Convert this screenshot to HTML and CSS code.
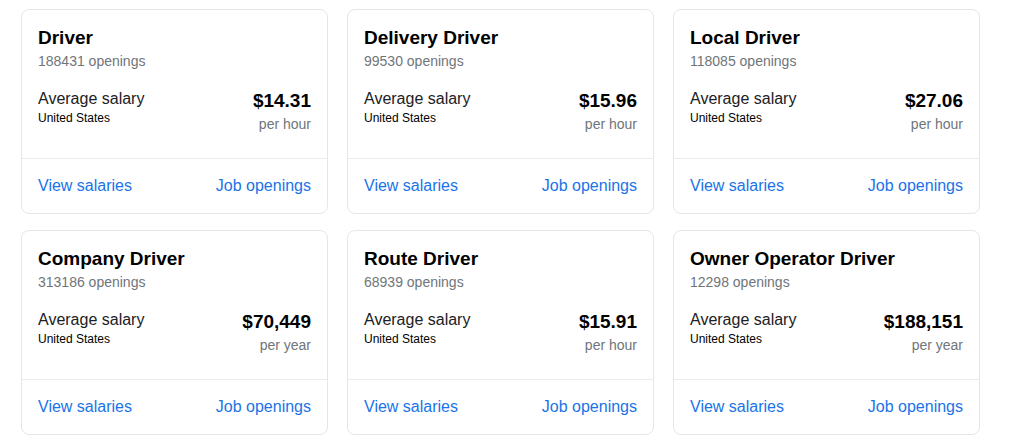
FILE: index.html
```html
<!DOCTYPE html>
<html lang="en">
<head>
  <meta charset="UTF-8">
  <meta name="viewport" content="width=device-width, initial-scale=1.0">
  <title>Driver salaries</title>
  <link rel="stylesheet" href="styles.css">
</head>
<body>
  <div class="salary-grid">
    <div class="salary-card">
      <div class="card-body">
        <div class="job-title">Driver</div>
        <div class="job-openings">188431 openings</div>
        <div class="salary-row">
          <div class="salary-label">
            <div class="label-main">Average salary</div>
            <div class="label-region">United States</div>
          </div>
          <div class="salary-value">
            <div class="amount">$14.31</div>
            <div class="period">per hour</div>
          </div>
        </div>
      </div>
      <div class="card-links">
        <a href="#">View salaries</a>
        <a href="#">Job openings</a>
      </div>
    </div>
    <div class="salary-card">
      <div class="card-body">
        <div class="job-title">Delivery Driver</div>
        <div class="job-openings">99530 openings</div>
        <div class="salary-row">
          <div class="salary-label">
            <div class="label-main">Average salary</div>
            <div class="label-region">United States</div>
          </div>
          <div class="salary-value">
            <div class="amount">$15.96</div>
            <div class="period">per hour</div>
          </div>
        </div>
      </div>
      <div class="card-links">
        <a href="#">View salaries</a>
        <a href="#">Job openings</a>
      </div>
    </div>
    <div class="salary-card">
      <div class="card-body">
        <div class="job-title">Local Driver</div>
        <div class="job-openings">118085 openings</div>
        <div class="salary-row">
          <div class="salary-label">
            <div class="label-main">Average salary</div>
            <div class="label-region">United States</div>
          </div>
          <div class="salary-value">
            <div class="amount">$27.06</div>
            <div class="period">per hour</div>
          </div>
        </div>
      </div>
      <div class="card-links">
        <a href="#">View salaries</a>
        <a href="#">Job openings</a>
      </div>
    </div>
    <div class="salary-card">
      <div class="card-body">
        <div class="job-title">Company Driver</div>
        <div class="job-openings">313186 openings</div>
        <div class="salary-row">
          <div class="salary-label">
            <div class="label-main">Average salary</div>
            <div class="label-region">United States</div>
          </div>
          <div class="salary-value">
            <div class="amount">$70,449</div>
            <div class="period">per year</div>
          </div>
        </div>
      </div>
      <div class="card-links">
        <a href="#">View salaries</a>
        <a href="#">Job openings</a>
      </div>
    </div>
    <div class="salary-card">
      <div class="card-body">
        <div class="job-title">Route Driver</div>
        <div class="job-openings">68939 openings</div>
        <div class="salary-row">
          <div class="salary-label">
            <div class="label-main">Average salary</div>
            <div class="label-region">United States</div>
          </div>
          <div class="salary-value">
            <div class="amount">$15.91</div>
            <div class="period">per hour</div>
          </div>
        </div>
      </div>
      <div class="card-links">
        <a href="#">View salaries</a>
        <a href="#">Job openings</a>
      </div>
    </div>
    <div class="salary-card">
      <div class="card-body">
        <div class="job-title">Owner Operator Driver</div>
        <div class="job-openings">12298 openings</div>
        <div class="salary-row">
          <div class="salary-label">
            <div class="label-main">Average salary</div>
            <div class="label-region">United States</div>
          </div>
          <div class="salary-value">
            <div class="amount">$188,151</div>
            <div class="period">per year</div>
          </div>
        </div>
      </div>
      <div class="card-links">
        <a href="#">View salaries</a>
        <a href="#">Job openings</a>
      </div>
    </div>
  </div>
</body>
</html>
```

FILE: styles.css
```css
body {
  margin: 0;
  font-family: "Liberation Sans", Arial, sans-serif;
  color: #202124;
  background-color: #fff;
}
.salary-grid {
  display: grid;
  grid-template-columns: repeat(3, 307px);
  column-gap: 19px;
  row-gap: 16px;
  padding: 9px 0 0 21px;
}
.salary-card {
  border: 1px solid #e6e6e6;
  border-radius: 8px;
  background-color: #fff;
}
.card-body {
  padding: 16px 16px 24px;
}
.job-title {
  font-size: 19px;
  font-weight: bold;
  line-height: 24px;
  color: #000;
}
.job-openings {
  font-size: 14px;
  line-height: 22px;
  color: #70757a;
}
.salary-row {
  display: flex;
  justify-content: space-between;
  margin-top: 16px;
}
.label-main {
  font-size: 16px;
  line-height: 22px;
}
.label-region {
  font-size: 12px;
  line-height: 16px;
  color: #000;
}
.salary-value {
  text-align: right;
}
.amount {
  margin-top: 1px;
  font-size: 19px;
  font-weight: bold;
  line-height: 24px;
  color: #000;
}
.period {
  margin-top: 1px;
  font-size: 14px;
  line-height: 20px;
  color: #70757a;
}
.card-links {
  display: flex;
  justify-content: space-between;
  border-top: 1px solid #ebebeb;
  padding: 15px 16px 15px;
  font-size: 16px;
  line-height: 24px;
}
.card-links a {
  color: #1a73e8;
  text-decoration: none;
}
```
